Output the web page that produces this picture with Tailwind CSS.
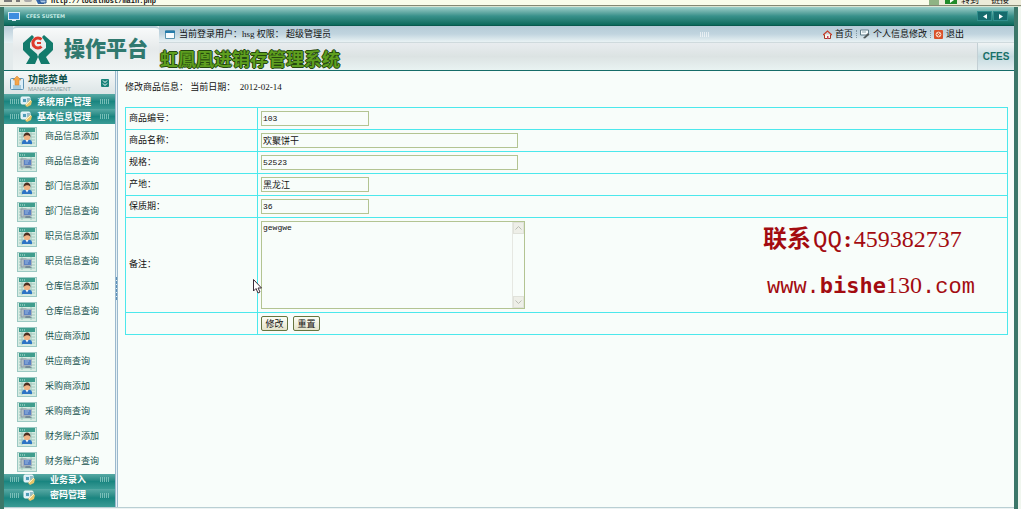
<!DOCTYPE html>
<html lang="zh-CN">
<head>
<meta charset="utf-8">
<title>虹鳳凰进销存管理系统</title>
<script src="https://cdn.jsdelivr.net/npm/@tailwindcss/browser@4"></script>
</head>
<body class="flex min-h-screen flex-col bg-[#f0f6ef] font-['Liberation_Serif','Noto_Sans_CJK_SC',sans-serif] text-[9px] leading-3 text-[#111]">
<svg class="hidden">
  <symbol id="add" viewBox="0 0 20 20">
    <rect x=".5" y=".5" width="19" height="19" fill="#d6ebe2" stroke="#9cc9c3"/>
    <path d="M2 7h16M2 10h16M2 13h16M2 16h16M5 5v13M14 5v13" stroke="#a0c8bd"/>
    <rect x="2" y="1" width="16" height="4" fill="#3f9d8d"/><path d="M3 3h6" stroke="#c2e5de" stroke-dasharray="1 1"/>
    <path d="M5 16c0-3 2-3.500 5-3.500s5 .5 5 3.500v1H5z" fill="#2e74c4"/><path d="M8.500 13l1.500 2.500 1.500-2.500z" fill="#fff"/>
    <circle cx="10" cy="10" r="3.200" fill="#f0b284"/><path d="M6.500 10c-.5-6 7.500-6 7 0-1-2-5-2.500-7 0z" fill="#4c2d20"/>
  </symbol>
  <symbol id="query" viewBox="0 0 20 20">
    <rect x=".5" y=".5" width="19" height="19" fill="#d6ebe2" stroke="#9cc9c3"/>
    <path d="M2 7h16M2 10h16M2 13h16M2 16h16M5 5v13M14 5v13" stroke="#a0c8bd"/>
    <rect x="2" y="1" width="16" height="4" fill="#3f9d8d"/><path d="M3 3h6" stroke="#c2e5de" stroke-dasharray="1 1"/>
    <rect x="4" y="7" width="5" height="8" fill="#b6c3c9" stroke="#8797a0"/>
    <rect x="6.500" y="7.500" width="8" height="6" fill="#5c82c4" stroke="#a5b0bb"/><path d="M8 9h4M8 11h3" stroke="#98b8e0"/>
    <path d="M9 14h4l2 2H8z" fill="#778b98"/>
  </symbol>
  <symbol id="folder" viewBox="0 0 13 11">
    <rect x="1" y="1" width="9" height="7" rx="1" fill="#d5ecf5" stroke="#f3fbfc"/><path d="M3 3h3v3H3z" fill="#4f9cb7"/>
    <path d="M7 3h3M7 5h3" stroke="#548e9b"/><path d="M5 9l5-5 2 1-1 4-4 2z" fill="#e9c66b"/><path d="M6 9l5-5" stroke="#fff3c8"/>
  </symbol>
  <symbol id="grip" viewBox="0 0 9 5"><path d="M.5 0v5M2.500 0v5M4.500 0v5M6.500 0v5M8.500 0v5" stroke="#8ccac4" stroke-width=".8"/></symbol>
</svg>

<div class="flex h-[5px] items-end overflow-hidden bg-[#fafcea]">
  <div class="flex h-[5px] w-9 items-start gap-1 bg-[#ecebd9] pl-1"><i class="h-[2px] w-2 bg-[#777]"></i><i class="h-[2px] w-1 bg-[#777]"></i><i class="h-[2px] w-2 rounded-b bg-[#aaa]"></i></div>
  <svg class="h-[5px] w-[11px]" viewBox="0 0 11 5"><path d="M0 0h8v4H2z" fill="#3769ad"/><path d="M3 0h7v3H5z" fill="#a8c8e8" stroke="#25558e"/></svg>
  <div class="ml-1 grow font-['Liberation_Mono',monospace] text-[7px] leading-[7px] font-bold">http://localhost/main.php</div>
  <div class="h-[5px] w-2.5 bg-[#8fb384]"></div>
  <div class="flex h-[5px] w-[82px] items-end overflow-hidden bg-[#ecebd9] pl-1.5"><svg class="h-[5px] w-3" viewBox="0 0 12 5"><path d="M0 0h12v4H0z" fill="#218b2b"/><path d="M5 3l4-3H5z" fill="#fff"/></svg><span class="ml-1 leading-[10px]">转到</span><span class="ml-3 leading-[10px]">链接</span></div>
</div>
<div class="h-0.5 border-t border-[#858873] bg-[#dce5d2]"></div>

<div class="relative mr-[3px] flex grow flex-col border-r-4 border-l-4 border-[#3b7769] bg-[#f8fdfa]">
  <div class="flex h-[19px] items-center justify-between border-b border-[#09594e] bg-linear-to-b from-[#9ccfca] via-[#38918b] to-[#096a5c] pr-1.5 pl-1">
    <div class="flex items-center gap-1.5">
      <svg class="h-[9px] w-3" viewBox="0 0 12 9"><rect x=".5" y=".5" width="11" height="7" fill="#3e8de0" stroke="#d9ecf8"/><path d="M4 8.500h4" stroke="#d9ecf8"/></svg>
      <span class="font-['DejaVu_Sans',sans-serif] text-[5px] font-bold text-[#c5eae3]">CFES SUSTEM</span>
    </div>
    <div class="flex gap-px">
      <button aria-label="后退" class="flex h-2.5 w-[15px] items-center justify-center border border-[#2f8e8c] bg-[#166b6d]"><svg class="h-[5px] w-1" viewBox="0 0 4 5"><path d="M4 0v5L0 2.500z" fill="#fff"/></svg></button>
      <button aria-label="前进" class="flex h-2.5 w-[15px] items-center justify-center border border-[#2f8e8c] bg-[#166b6d]"><svg class="h-[5px] w-1" viewBox="0 0 4 5"><path d="M0 0v5l4-2.500z" fill="#fff"/></svg></button>
    </div>
  </div>

  <header class="flex h-[45px] border-b border-[#166c68] bg-[#e4ebec]">
    <div class="h-[17px] w-[9px] bg-linear-to-b from-[#b8ccd9] to-[#e6f0f3]"></div>
    <div class="flex w-[146px] items-center rounded-t border-t-2 border-[#b5cbd6] bg-linear-to-b from-[#f8fafa] via-[#e6eaeb] to-[#eff4f4] pl-[9px]">
      <svg class="h-[31px] w-8" viewBox="0 0 32 31">
        <path d="M10 1L1 9v7l7 7-4 7h9l3-7-1-3-7-6V9l4-6zM22 1l9 8v7l-7 7 4 7h-9l-3-7 1-3 7-6V9l-4-6z" fill="#137b6c"/>
        <path d="M19.500 5.500A5 5 0 1 0 19.500 12.500" fill="none" stroke="#de3a2c" stroke-width="3"/>
        <path d="M15 9h4" stroke="#de3a2c" stroke-width="2"/>
      </svg>
      <strong class="ml-2.5 text-[21px] leading-6 font-black text-[#30796f]">操作平台</strong>
    </div>
    <div class="flex grow flex-col">
      <div class="flex h-[17px] items-center border-b border-[#cfdadd] bg-linear-to-b from-[#b5cad7] via-[#c1d5df] to-[#e9f2f4] pr-[50px] pl-1.5">
        <svg class="h-[9px] w-2.5" viewBox="0 0 10 9"><path d="M.5.5h9v8h-9z" fill="#f8fcff" stroke="#5a93ae"/><path d="M0 1h10v2H0z" fill="#267cab"/></svg>
        <span class="ml-1 whitespace-pre">当前登录用户：hsg 权限： 超级管理员</span>
        <div class="flex grow justify-center"><svg class="ml-64 h-[5px] w-[9px] opacity-60" viewBox="0 0 9 5"><path d="M.5 0v5M2.500 0v5M4.500 0v5M6.500 0v5M8.500 0v5" stroke="#fff"/></svg></div>
        <nav class="flex items-center gap-[3px]">
          <a href="#" class="flex items-center gap-[3px]"><svg class="h-[9px] w-[9px]" viewBox="0 0 9 9"><path d="M1.500 4.500V8.500h6v-4" fill="#fff5e9" stroke="#a33b25"/><path d="M0 5l4.500-4L9 5" fill="none" stroke="#cb3a25" stroke-width="1.300"/><path d="M4 6h1.500v3H4z" fill="#c46"/></svg>首页</a>
          <i class="h-2 border-l border-dotted border-[#8298a4]"></i>
          <a href="#" class="flex items-center gap-[3px]"><svg class="h-2.5 w-2.5" viewBox="0 0 10 10"><path d="M.5 1h8v5h-8z" fill="#f5fbfd" stroke="#5c7b86"/><path d="M2 3h4" stroke="#92abb2"/><path d="M3 9l5-5 1.500 1.500L5 9.500z" fill="#525b5c"/></svg>个人信息修改</a>
          <i class="h-2 border-l border-dotted border-[#8298a4]"></i>
          <a href="#" class="flex items-center gap-[3px]"><svg class="h-[9px] w-[9px]" viewBox="0 0 9 9"><rect width="9" height="9" rx="1" fill="#d9512b"/><circle cx="4.500" cy="4.500" r="2.400" fill="none" stroke="#fbe1cb"/><path d="M3 3l3 3M6 3L3 6" stroke="#fbe1cb" stroke-width=".7"/></svg>退出</a>
        </nav>
      </div>
      <div class="flex grow items-center justify-between bg-linear-to-b from-[#e8ecef] via-[#dce3e3] to-[#e9f3f2]">
        <h1 class="pt-1.5 pl-px text-[18px] leading-5 font-bold text-[#5f9f1f] [text-shadow:1px_0_#24470f,-1px_0_#24470f,0_1px_#24470f,0_-1px_#24470f]">虹鳳凰进销存管理系统</h1>
        <div class="flex h-full w-[37px] items-center justify-center border-l border-[#c3d0d5] bg-linear-to-b from-[#f0f4f5] via-[#c5dbe0] to-[#e3edf0] font-['Liberation_Sans',sans-serif] text-[10px] font-bold text-[#176f67]">CFES</div>
      </div>
    </div>
  </header>

  <div class="flex grow">
    <aside class="flex w-[111px] shrink-0 flex-col">
      <div class="flex h-[23px] items-center bg-linear-to-b from-[#f5f8f8] to-[#dce5e6] px-1.5">
        <svg class="h-[14px] w-[14px]" viewBox="0 0 14 14"><rect x=".5" y="2.500" width="13" height="11" rx="1" fill="#dbeef8" stroke="#5c93b4"/><path d="M3 10h8M3 12h8" stroke="#73a9c3"/><path d="M5 9V4H3l4-4 4 4H9v5z" fill="#f3a64b" stroke="#d07f2c" stroke-width=".5"/></svg>
        <div class="ml-1 grow"><div class="text-[10px] leading-3 font-bold text-[#0e504b]">功能菜单</div><div class="font-['Liberation_Sans',sans-serif] text-[6px] leading-[6px] text-[#8b9c9c]">MANAGEMENT</div></div>
        <button aria-label="折叠" class="h-2 w-2"><svg viewBox="0 0 8 8"><rect width="8" height="8" rx="1" fill="#19837a"/><path d="M2 1.500L4 3.500 6 1.500M2 4.500L4 6.500 6 4.500" fill="none" stroke="#fff"/></svg></button>
      </div>
      <a href="#" class="flex h-[15px] items-center bg-linear-to-b from-[#57aaa5] via-[#198580] to-[#3a9c96] px-1.5 font-bold text-white"><svg class="h-[5px] w-[9px]"><use href="#grip"/></svg><svg class="ml-px h-[11px] w-[13px]"><use href="#folder"/></svg><span class="grow pl-1">系统用户管理</span><svg class="h-[5px] w-[9px]"><use href="#grip"/></svg></a>
      <a href="#" class="flex h-[15px] items-center bg-linear-to-b from-[#57aaa5] via-[#198580] to-[#3a9c96] px-1.5 font-bold text-white"><svg class="h-[5px] w-[9px]"><use href="#grip"/></svg><svg class="ml-px h-[11px] w-[13px]"><use href="#folder"/></svg><span class="grow pl-1">基本信息管理</span><svg class="h-[5px] w-[9px]"><use href="#grip"/></svg></a>
      <nav class="flex flex-col text-[#17544f] [&>a]:flex [&>a]:h-[25px] [&>a]:items-center [&>a]:gap-2 [&>a]:pl-[13px] [&_span]:pb-0.5 [&_svg]:h-5 [&_svg]:w-5">
        <a href="#"><svg><use href="#add"/></svg><span>商品信息添加</span></a>
        <a href="#"><svg><use href="#query"/></svg><span>商品信息查询</span></a>
        <a href="#"><svg><use href="#add"/></svg><span>部门信息添加</span></a>
        <a href="#"><svg><use href="#query"/></svg><span>部门信息查询</span></a>
        <a href="#"><svg><use href="#add"/></svg><span>职员信息添加</span></a>
        <a href="#"><svg><use href="#query"/></svg><span>职员信息查询</span></a>
        <a href="#"><svg><use href="#add"/></svg><span>仓库信息添加</span></a>
        <a href="#"><svg><use href="#query"/></svg><span>仓库信息查询</span></a>
        <a href="#"><svg><use href="#add"/></svg><span>供应商添加</span></a>
        <a href="#"><svg><use href="#query"/></svg><span>供应商查询</span></a>
        <a href="#"><svg><use href="#add"/></svg><span>采购商添加</span></a>
        <a href="#"><svg><use href="#query"/></svg><span>采购商查询</span></a>
        <a href="#"><svg><use href="#add"/></svg><span>财务账户添加</span></a>
        <a href="#"><svg><use href="#query"/></svg><span>财务账户查询</span></a>
      </nav>
      <a href="#" class="flex h-[15px] items-center bg-linear-to-b from-[#57aaa5] via-[#198580] to-[#3a9c96] px-1.5 pb-1 font-bold text-white"><svg class="h-[5px] w-[9px]"><use href="#grip"/></svg><svg class="ml-1 h-[11px] w-[13px]"><use href="#folder"/></svg><span class="grow text-center">业务录入</span><svg class="h-[5px] w-[9px]"><use href="#grip"/></svg></a>
      <a href="#" class="flex grow items-center bg-linear-to-b from-[#57aaa5] via-[#198580] to-[#3a9c96] px-1.5 pb-1.5 font-bold text-white"><svg class="h-[5px] w-[9px]"><use href="#grip"/></svg><svg class="ml-1 h-[11px] w-[13px]"><use href="#folder"/></svg><span class="grow text-center">密码管理</span><svg class="h-[5px] w-[9px]"><use href="#grip"/></svg></a>
    </aside>
    <div class="flex w-[3px] shrink-0 items-center border-x border-[#9bb9cd] bg-[#e6f1f6]"><svg class="h-6 w-px" viewBox="0 0 1 24"><path d="M.5 0v24" stroke="#5b91bb" stroke-width="2" stroke-dasharray="3 1"/></svg></div>

    <main class="grow pt-2.5 pr-1.5 pl-[7px]">
      <p class="whitespace-pre">修改商品信息： 当前日期：  2012-02-14</p>
      <form class="pt-3.5" onsubmit="return false">
        <table class="w-full border-collapse text-left [&_td]:border [&_td]:border-[#4ce8ec] [&_td]:p-[3px] [&_th]:w-[132px] [&_th]:border [&_th]:border-[#4ce8ec] [&_th]:px-[3px] [&_th]:pb-0.5 [&_th]:font-normal [&_input]:block [&_input]:h-[15px] [&_input]:border [&_input]:border-[#b3c492] [&_input]:px-px">
          <tr><th><label for="code">商品编号：</label></th><td><input id="code" value="103" class="w-[108px] font-['Liberation_Mono',monospace] text-[8px]"></td></tr>
          <tr><th><label for="name">商品名称：</label></th><td><input id="name" value="欢聚饼干" class="w-[257px]"></td></tr>
          <tr><th><label for="spec">规格：</label></th><td><input id="spec" value="52523" class="w-[257px] font-['Liberation_Mono',monospace] text-[8px]"></td></tr>
          <tr><th><label for="origin">产地：</label></th><td><input id="origin" value="黑龙江" class="w-[108px]"></td></tr>
          <tr><th><label for="life">保质期：</label></th><td><input id="life" value="36" class="w-[108px] font-['Liberation_Mono',monospace] text-[8px]"></td></tr>
          <tr><th><label for="note">备注：</label></th><td>
            <div class="flex h-[88px] w-[264px] border border-[#b3c492]">
              <textarea id="note" class="grow resize-none overflow-hidden px-px font-['Liberation_Mono',monospace] text-[8px] leading-3">gewgwe</textarea>
              <div class="flex w-3 flex-col justify-between border-l border-[#e6e8e2]">
                <button type="button" aria-label="向上滚动" class="flex h-3 items-center justify-center border border-[#e0e2da] bg-[#eeefe8]"><svg class="h-1 w-[7px]" viewBox="0 0 7 4"><path d="M.5 3.500l3-3 3 3" fill="none" stroke="#bbbdb4"/></svg></button>
                <button type="button" aria-label="向下滚动" class="flex h-3 items-center justify-center border border-[#e0e2da] bg-[#eeefe8]"><svg class="h-1 w-[7px]" viewBox="0 0 7 4"><path d="M.5.5l3 3 3-3" fill="none" stroke="#bbbdb4"/></svg></button>
              </div>
            </div></td></tr>
          <tr><th></th><td><div class="flex gap-[5px]">
            <button type="submit" class="h-[15px] w-[27px] rounded-xs border border-[#66743f] bg-linear-to-b from-[#fdfdf5] to-[#e4e4cb] leading-3">修改</button>
            <button type="reset" class="h-[15px] w-[27px] rounded-xs border border-[#66743f] bg-linear-to-b from-[#fdfdf5] to-[#e4e4cb] leading-3">重置</button>
          </div></td></tr>
        </table>
      </form>
    </main>
  </div>
  <div class="h-[3px] border-t border-[#b9cfd3] bg-[#edf3f3]"></div>

  <div class="absolute top-[216px] right-[36px] flex w-[215px] flex-col gap-3 text-[24px] leading-8 text-[#a30b10]">
    <div class="flex items-baseline whitespace-nowrap"><strong>联系</strong><span class="pl-0.5 font-['Liberation_Mono',monospace]">QQ</span><b class="px-0.5">:</b><span>459382737</span></div>
    <div class="flex items-baseline pl-1 font-['Liberation_Mono',monospace] text-[22px]"><span>www.</span><b class="font-['DejaVu_Sans_Mono',monospace]">bishe</b><span class="font-['Liberation_Serif',serif] text-[24px]">130</span><span>.com</span></div>
  </div>
  <svg class="absolute top-[272px] left-[249px] h-4 w-[9px]" viewBox="0 0 9 16"><path d="M.5.500v11.500L3 9.500l2 4.500 2-1-2-4h3.500z" fill="#fff" stroke="#3d2c38"/></svg>
</div>
</body>
</html>
